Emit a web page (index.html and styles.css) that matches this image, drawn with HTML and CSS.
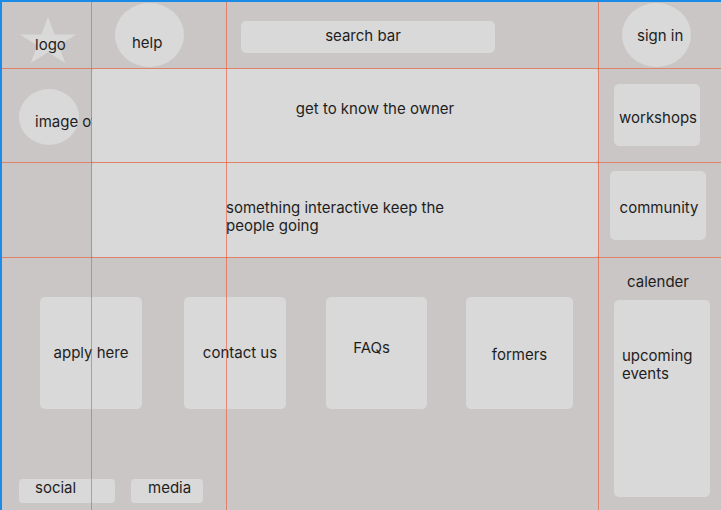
FILE: index.html
```html
<!DOCTYPE html>
<html lang="en">
<head>
<meta charset="utf-8">
<title>Wireframe</title>
<link rel="stylesheet" href="styles.css">
</head>
<body>
<div class="frame">
  <div class="cell logo-cell">
    <div class="logo">
      <svg class="star" viewBox="-0.951 -1 1.902 1.809" preserveAspectRatio="none" width="56" height="46" aria-hidden="true">
        <polygon points="0,-1 0.2245,-0.309 0.951,-0.309 0.363,0.118 0.588,0.809 0,0.382 -0.588,0.809 -0.363,0.118 -0.951,-0.309 -0.2245,-0.309" fill="#D9D9D9"/>
      </svg>
      <span class="logo-text">logo</span>
    </div>
  </div>
  <div class="cell help-cell">
    <div class="bubble help"><span>help</span></div>
  </div>
  <div class="cell search-cell">
    <div class="search">search bar</div>
  </div>
  <div class="cell signin-cell">
    <div class="bubble signin"><span>sign in</span></div>
  </div>

  <div class="cell image-cell">
    <div class="image-circle"><span class="image-text">image of owner</span></div>
  </div>
  <div class="panel panel-owner">get to know the owner</div>
  <div class="cell side-cell workshops-cell">
    <div class="card workshops">workshops</div>
  </div>

  <div class="panel panel-interactive"><p>something interactive keep the people going</p></div>
  <div class="cell side-cell community-cell">
    <div class="card community">community</div>
  </div>

  <div class="bottom">
    <div class="tiles">
      <div class="card tile apply">apply here</div>
      <div class="card tile contact">contact us</div>
      <div class="card tile faq">FAQs</div>
      <div class="card tile formers">formers</div>
    </div>
    <div class="socials">
      <div class="chip social">social</div>
      <div class="chip media">media</div>
    </div>
  </div>
  <div class="calendar">
    <div class="calendar-title">calender</div>
    <div class="card events"><p>upcoming events</p></div>
  </div>

  <div class="guide v v1"></div>
  <div class="guide v v2"></div>
  <div class="guide v v3"></div>
  <div class="guide h h1"></div>
  <div class="guide h h2"></div>
  <div class="guide h h3"></div>
</div>
</body>
</html>
```

FILE: styles.css
```css
* { box-sizing: border-box; }

html, body {
  margin: 0;
  padding: 0;
  background: #CAC6C5;
}

body {
  font-family: "Inter", "Noto Sans", sans-serif;
  font-size: 15px;
  line-height: 18px;
  color: #1E1E1E;
}

p { margin: 0; }

.frame {
  position: relative;
  width: 721px;
  height: 510px;
  overflow: hidden;
  display: grid;
  grid-template-columns: 91px 135px 372px 123px;
  grid-template-rows: 68px 94px 95px 253px;
  background: #CAC6C5;
}

.frame::after {
  content: "";
  position: absolute;
  inset: 0;
  box-shadow: inset 2px 2px 0 #1A8CE8;
  pointer-events: none;
  z-index: 5;
}

.cell { min-width: 0; min-height: 0; }

/* top row */
.logo-cell { grid-column: 1; grid-row: 1; padding: 17px 0 0 20px; }
.logo {
  display: grid;
  width: 56px;
  height: 46px;
}
.logo > * { grid-area: 1 / 1; }
.star { display: block; }
.logo-text {
  align-self: start;
  justify-self: start;
  padding: 19px 0 0 15px;
}

.help-cell { grid-column: 2; grid-row: 1; padding: 3px 0 0 24px; }
.signin-cell { grid-column: 4; grid-row: 1; padding: 3px 0 0 24px; }

.bubble {
  width: 69px;
  height: 64px;
  border-radius: 50%;
  background: #D9D9D9;
  display: flex;
}
.help span { padding: 31px 0 0 17px; }
.signin span { padding: 24px 0 0 15px; }

.search-cell { grid-column: 3; grid-row: 1; padding: 21px 0 0 15px; }
.search {
  width: 254px;
  height: 32px;
  border-radius: 5px;
  background: #D9D9D9;
  display: flex;
  justify-content: center;
  padding: 6px 10px 0 0;
}

/* middle rows */
.image-cell { grid-column: 1; grid-row: 2; padding: 21px 0 0 19px; }
.image-circle {
  width: 60px;
  height: 56px;
  border-radius: 50%;
  background: #D9D9D9;
  padding: 24px 0 0 16px;
  white-space: nowrap;
}

.panel {
  position: relative;
  z-index: 1;
  background: #D9D9D9;
  border-radius: 3px;
  grid-column: 2 / 4;
  margin: 1px 0 0 1px;
}
.panel-owner {
  grid-row: 2;
  text-align: center;
  padding: 31px 0 0 60px;
}
.panel-interactive {
  grid-row: 3;
  padding: 36px 0 0 134px;
}
.panel-interactive p { width: 232px; }

.card {
  background: #D9D9D9;
  border-radius: 5px;
}

.workshops-cell { grid-column: 4; grid-row: 2; padding: 16px 0 0 16px; }
.workshops {
  width: 86px;
  height: 62px;
  display: flex;
  justify-content: center;
  padding: 25px 0 0 2px;
}

.community-cell { grid-column: 4; grid-row: 3; padding: 9px 0 0 12px; }
.community {
  width: 96px;
  height: 69px;
  display: flex;
  justify-content: center;
  padding: 28px 0 0 2px;
}

/* bottom */
.bottom {
  grid-column: 1 / 4;
  grid-row: 4;
  display: flex;
  flex-direction: column;
  padding: 40px 0 7px 0;
}
.tiles {
  display: flex;
  padding-left: 40px;
}
.tile {
  width: 102px;
  height: 112px;
  display: flex;
  justify-content: center;
  align-items: center;
}
.contact { margin-left: 42px; padding-left: 10px; }
.faq { margin-left: 40px; width: 101px; padding: 0 10px 10px 0; }
.formers { margin-left: 39px; width: 107px; padding-top: 4px; }

.socials {
  margin-top: auto;
  display: flex;
  gap: 16px;
  padding-left: 19px;
}
.chip {
  height: 24px;
  background: #D9D9D9;
  border-radius: 4px;
  padding-left: 16px;
}
.social { width: 96px; }
.media { width: 72px; padding-left: 17px; }

.calendar {
  grid-column: 4;
  grid-row: 4;
  padding: 16px 0 0 16px;
}
.calendar-title {
  width: 88px;
  text-align: center;
  margin-bottom: 9px;
}
.events {
  width: 96px;
  height: 197px;
  padding: 47px 0 0 8px;
}

/* layout guides */
.guide {
  position: absolute;
  background: rgba(242, 72, 34, 0.55);
  z-index: 4;
  pointer-events: none;
}
.v { top: 0; bottom: 0; width: 1px; }
.h { left: 0; right: 0; height: 1px; }
.v1 { left: 91px; }
.v2 { left: 226px; }
.v3 { left: 598px; }
.h1 { top: 68px; }
.h2 { top: 162px; }
.h3 { top: 257px; }
```
